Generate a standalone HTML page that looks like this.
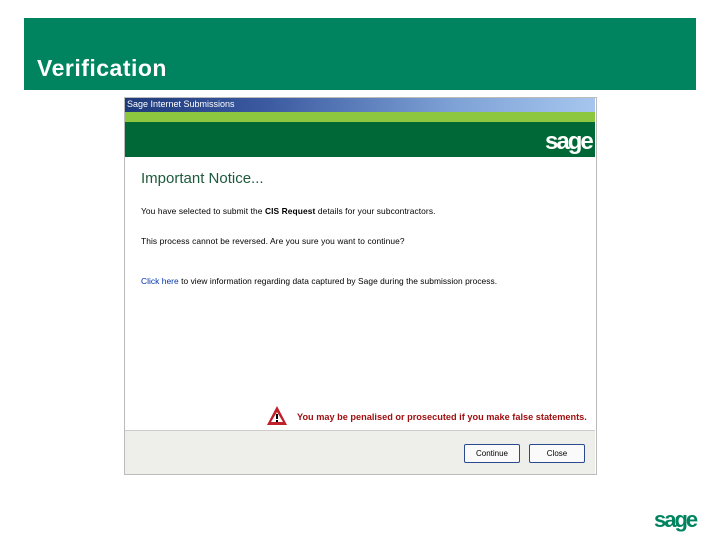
<!DOCTYPE html>
<html><head><style>
body{margin:0;width:720px;height:540px;background:#fff;position:relative;font-family:"Liberation Sans",sans-serif;overflow:hidden}
.a{position:absolute}
</style></head><body>
<div class="a" style="left:24px;top:18px;width:672px;height:72px;background:#00845f"></div>
<div class="a" style="left:37px;top:55px;color:#fff;font-weight:bold;font-size:23px;letter-spacing:0.5px">Verification</div>

<div class="a" style="left:124px;top:97px;width:471px;height:376px;border:1px solid #bbb;background:#fff"></div>
<div class="a" style="left:125px;top:98px;width:470px;height:14px;background:linear-gradient(90deg,#1e3a7a,#3b5aa0 30%,#7ea2d6 70%,#a6c6ee)"></div>
<div class="a" style="left:127px;top:99px;color:#fff;font-size:9px;">Sage Internet Submissions</div>
<div class="a" style="left:125px;top:112px;width:470px;height:10px;background:#8dc63f"></div>
<div class="a" style="left:125px;top:122px;width:470px;height:35px;background:#006837"></div>
<div class="a" style="left:545px;top:128px;color:#fff;font-size:24px;font-weight:bold;letter-spacing:-2px">sage</div>
<div class="a" style="left:141px;top:170px;color:#1e5a3c;font-size:15px">Important Notice...</div>
<div class="a" style="left:141px;top:206px;color:#000;font-size:8.4px;letter-spacing:0.1px">You have selected to submit the <b>CIS Request</b> details for your subcontractors.</div>
<div class="a" style="left:141px;top:236px;color:#000;font-size:8.4px;letter-spacing:0.1px">This process cannot be reversed.  Are you sure you want to continue?</div>
<div class="a" style="left:141px;top:276px;color:#000;font-size:8.4px;letter-spacing:0.05px"><span style="color:#0033aa">Click here</span> to view information regarding data captured by Sage during the submission process.</div>
<svg class="a" style="left:266px;top:405px" width="22" height="21"><polygon points="11,1 21,20 1,20" fill="#c0202a"/><polygon points="11,7 17,17 5,17" fill="#fff"/><rect x="10" y="9" width="2" height="5" fill="#000"/><rect x="10" y="15" width="2" height="2" fill="#000"/></svg>
<div class="a" style="left:297px;top:412px;color:#a01010;font-size:9.2px;font-weight:bold">You may be penalised or prosecuted if you make false statements.</div>
<div class="a" style="left:125px;top:430px;width:470px;height:43px;background:#eeeeea;border-top:1px solid #ccc"></div>
<div class="a" style="left:464px;top:444px;width:54px;height:17px;border:1px solid #2a4a90;border-radius:2px;background:#fafafa;font-size:8px;text-align:center;line-height:17px">Continue</div>
<div class="a" style="left:529px;top:444px;width:54px;height:17px;border:1px solid #2a4a90;border-radius:2px;background:#fafafa;font-size:8px;text-align:center;line-height:17px">Close</div>

<div class="a" style="left:654px;top:507px;color:#00845f;font-size:22px;font-weight:bold;letter-spacing:-2px">sage</div>
</body></html>
